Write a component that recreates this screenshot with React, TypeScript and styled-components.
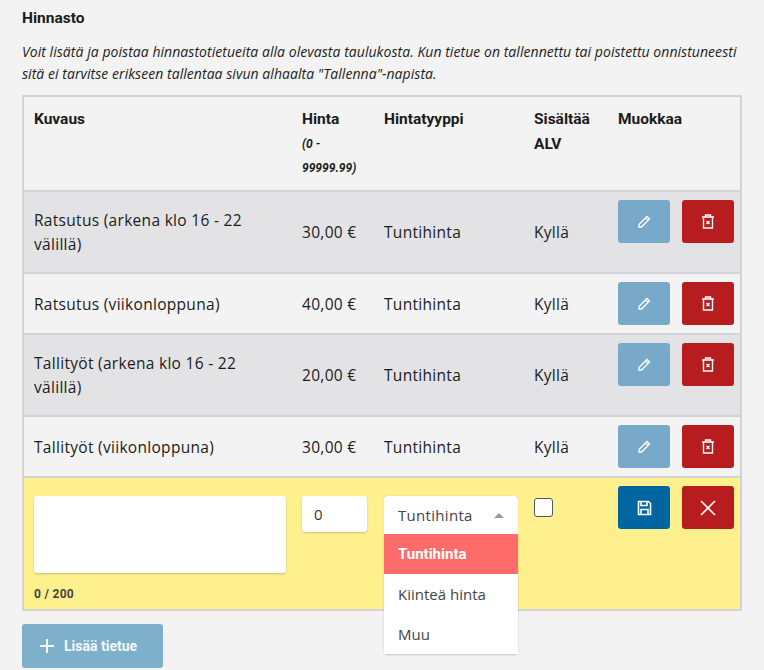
import React from "react";
import styled, { createGlobalStyle } from "styled-components";

const G = createGlobalStyle`
  body { margin: 0; background: #f3f3f3; font-family: "Open Sans", sans-serif; color: #1b1b1b; }
`;
const Page = styled.div`padding: 4px 22px 13px 22px; width: 720px;`;
const Title = styled.h3`margin: 0; font: 700 15.5px/24px Roboto, sans-serif; padding: 2px 0 0 0;`;
const Intro = styled.p`margin: 11px 0 10px; font: italic 14px/22px "Open Sans", sans-serif; letter-spacing: 0.05px; color: #222;`;
const Table = styled.table`border-collapse: collapse; width: 720px; border: 2px solid #d4d4d8; table-layout: fixed;`;
const Th = styled.th<{ w: number }>`width: ${p => p.w}px; text-align: left; vertical-align: top; padding: 10px 10px 10px; font: 700 15.5px/25px Roboto, sans-serif;`;
const Small = styled.span`display: block; font-size: 12px; font-style: italic; line-height: 24px;`;
const Tr = styled.tr<{ bg: string }>`background: ${p => p.bg}; border-top: 2px solid #d4d4d8;`;
const Td = styled.td<{ top?: boolean }>`padding: ${p => (p.top ? "8px 10px" : "10px")}; vertical-align: ${p => (p.top ? "top" : "middle")}; font-size: 15.5px; line-height: 24px; letter-spacing: 0.3px;`;
const Btns = styled.div`display: flex; gap: 12px;`;
const Btn = styled.button<{ bg: string }>`width: 52px; height: 43px; border: 0; border-radius: 3px; background: ${p => p.bg}; display: flex; align-items: center; justify-content: center; padding: 0; flex: none;`;
const TextArea = styled.div`width: 252px; height: 77px; background: #fff; border-radius: 3px; box-shadow: 0 1px 2px rgba(0,0,0,.2);`;
const Counter = styled.div`font: 700 12px Roboto, sans-serif; color: #444; margin-top: 14px;`;
const Num = styled.div`width: 65px; height: 36px; background: #fff; border-radius: 3px; box-shadow: 0 1px 2px rgba(0,0,0,.2); box-sizing: border-box; padding-left: 12px; line-height: 36px; font-size: 15px; color: #333;`;
const SelectWrap = styled.div`position: relative; width: 134px;`;
const Select = styled.div`height: 38px; background: #fff; border-radius: 3px 3px 0 0; box-sizing: border-box; padding: 0 14px; display: flex; align-items: center; justify-content: space-between; color: #444; font-size: 15px; box-shadow: 0 0 1px rgba(0,0,0,.3);`;
const Menu = styled.div`position: absolute; left: 0; top: 38px; width: 134px; background: #fff; border-radius: 0 0 4px 4px; box-shadow: 0 1px 2px rgba(0,0,0,.2); z-index: 2; letter-spacing: 0;`;
const Opt = styled.div<{ active?: boolean }>`height: 40px; line-height: 40px; padding: 0 14px; font-size: 15px; background: ${p => (p.active ? "#fe6b6b" : "#fff")}; color: ${p => (p.active ? "#fff" : "#444")}; font-weight: ${p => (p.active ? 700 : 400)}; font-family: ${p => (p.active ? "Roboto, sans-serif" : "inherit")};`;
const Check = styled.div`width: 17px; height: 17px; border: 1px solid #555; border-radius: 3px; background: #fff; margin-top: 12px;`;
const Add = styled.button`margin-top: 13px; width: 141px; height: 44px; border: 0; border-radius: 3px; background: #7eafcb; color: #f4f8fb; font: 700 14px Roboto, sans-serif; display: flex; align-items: center; gap: 10px; padding: 0 18px;`;

const Pencil = () => (<svg width="16" height="16" viewBox="0 0 16 16" fill="none" stroke="#fff" strokeWidth="1.3"><path d="M11 2.5l2.5 2.5L5.5 13H3v-2.5z M9.5 4l2.5 2.5" /></svg>);
const Trash = () => (<svg width="16" height="17" viewBox="0 0 16 17" fill="none" stroke="#fff" strokeWidth="1.4"><path d="M2 4h12M5.5 4V2h5v2M3.5 4v11h9V4" /><path d="M6.5 8l3 3M9.5 8l-3 3" /></svg>);
const Save = () => (<svg width="15" height="16" viewBox="0 0 15 16" fill="none" stroke="#fff" strokeWidth="1.6"><path d="M1.5 1.5h10l2 2v11h-12z" /><path d="M4 1.5v4h6v-4M4 14.5v-5h7v5" /></svg>);
const X = () => (<svg width="18" height="18" viewBox="0 0 18 18" stroke="#fff" strokeWidth="1.6"><path d="M2 2l14 14M16 2L2 16" /></svg>);

const rows = [
  ["Ratsutus (arkena klo 16 - 22 välillä)", "30,00 €", "#e3e3e5"],
  ["Ratsutus (viikonloppuna)", "40,00 €", "#f3f3f3"],
  ["Tallityöt (arkena klo 16 - 22 välillä)", "20,00 €", "#e3e3e5"],
  ["Tallityöt (viikonloppuna)", "30,00 €", "#f3f3f3"],
];

export default function App() {
  return (
    <Page>
      <G />
      <Title>Hinnasto</Title>
      <Intro>Voit lisätä ja poistaa hinnastotietueita alla olevasta taulukosta. Kun tietue on tallennettu tai poistettu onnistuneesti sitä ei tarvitse erikseen tallentaa sivun alhaalta "Tallenna"-napista.</Intro>
      <Table>
        <thead>
          <tr>
            <Th w={248}>Kuvaus</Th>
            <Th w={62}>Hinta<Small>(0 - 99999.99)</Small></Th>
            <Th w={130}>Hintatyyppi</Th>
            <Th w={64}>Sisältää ALV</Th>
            <Th w={112}>Muokkaa</Th>
          </tr>
        </thead>
        <tbody>
          {rows.map(([d, p, bg]) => (
            <Tr bg={bg} key={d}>
              <Td style={{ paddingTop: d.length > 30 ? 16 : 10, paddingBottom: d.length > 30 ? 16 : 10 }}>{d}</Td>
              <Td>{p}</Td>
              <Td>Tuntihinta</Td>
              <Td>Kyllä</Td>
              <Td top>
                <Btns>
                  <Btn bg="#79a9c9"><Pencil /></Btn>
                  <Btn bg="#b71c1f"><Trash /></Btn>
                </Btns>
              </Td>
            </Tr>
          ))}
          <Tr bg="#fef08c">
            <Td top style={{ paddingTop: 18, paddingBottom: 8 }}>
              <TextArea />
              <Counter>0 / 200</Counter>
            </Td>
            <Td top style={{ paddingTop: 18 }}><Num>0</Num></Td>
            <Td top style={{ paddingTop: 18 }}>
              <SelectWrap>
                <Select>Tuntihinta<svg width="10" height="6" viewBox="0 0 10 6"><path d="M0 6L5 1l5 5z" fill="#999" /></svg></Select>
                <Menu>
                  <Opt active>Tuntihinta</Opt>
                  <Opt>Kiinteä hinta</Opt>
                  <Opt>Muu</Opt>
                </Menu>
              </SelectWrap>
            </Td>
            <Td top><Check /></Td>
            <Td top>
              <Btns>
                <Btn bg="#0066a1"><Save /></Btn>
                <Btn bg="#b71c1f"><X /></Btn>
              </Btns>
            </Td>
          </Tr>
        </tbody>
      </Table>
      <Add><svg width="14" height="14" viewBox="0 0 14 14" stroke="#f4f8fb" strokeWidth="2"><path d="M7 0v14M0 7h14" /></svg>Lisää tietue</Add>
    </Page>
  );
}
